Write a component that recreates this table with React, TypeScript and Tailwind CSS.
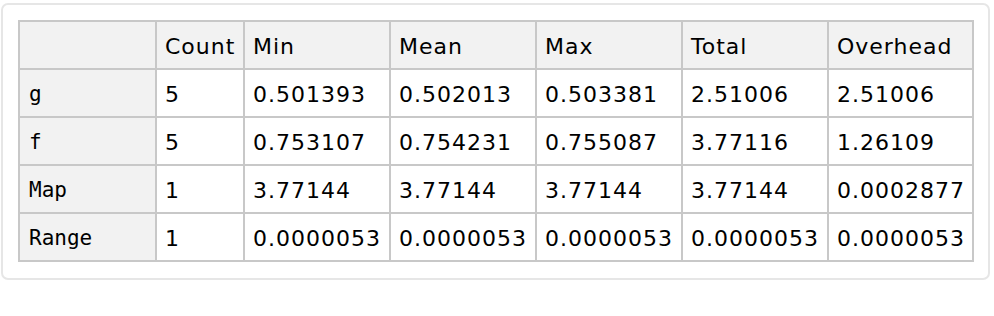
import { Fragment } from 'react';

const columns = ['Count', 'Min', 'Mean', 'Max', 'Total', 'Overhead'];

const rows: { name: string; values: string[] }[] = [
  { name: 'g', values: ['5', '0.501393', '0.502013', '0.503381', '2.51006', '2.51006'] },
  { name: 'f', values: ['5', '0.753107', '0.754231', '0.755087', '3.77116', '1.26109'] },
  { name: 'Map', values: ['1', '3.77144', '3.77144', '3.77144', '3.77144', '0.0002877'] },
  { name: 'Range', values: ['1', '0.0000053', '0.0000053', '0.0000053', '0.0000053', '0.0000053'] },
];

const cell = 'flex h-[48px] items-center border-r-2 border-b-2 border-[#c8c8c8] pl-[8px] whitespace-nowrap overflow-hidden';
const sans = 'font-["DejaVu_Sans",Verdana,sans-serif] text-[22px] tracking-[1px] text-black pt-[2px]';
const mono = 'font-["DejaVu_Sans_Mono",monospace] text-[21px] text-black pl-[9px] pt-[3px]';

export default function App() {
  return (
    <div className="h-[316px] w-[994px] bg-white pt-[3px] pl-[1px]">
      <div className="h-[277px] w-[989px] rounded-[7px] border-2 border-[#e6e6e6] p-[15px]">
        <div className="grid w-[956px] grid-cols-[137px_88px_146px_146px_146px_146px_145px] border-t-2 border-l-2 border-[#c8c8c8]">
          <div className={`${cell} bg-[#f2f2f2]`} />
          {columns.map((c) => (
            <div key={c} className={`${cell} ${sans} bg-[#f2f2f2]`}>
              {c}
            </div>
          ))}
          {rows.map((r) => (
            <Fragment key={r.name}>
              <div className={`${cell} ${mono} bg-[#f2f2f2]`}>{r.name}</div>
              {r.values.map((v, i) => (
                <div key={i} className={`${cell} ${sans} bg-white`}>
                  {v}
                </div>
              ))}
            </Fragment>
          ))}
        </div>
      </div>
    </div>
  );
}
